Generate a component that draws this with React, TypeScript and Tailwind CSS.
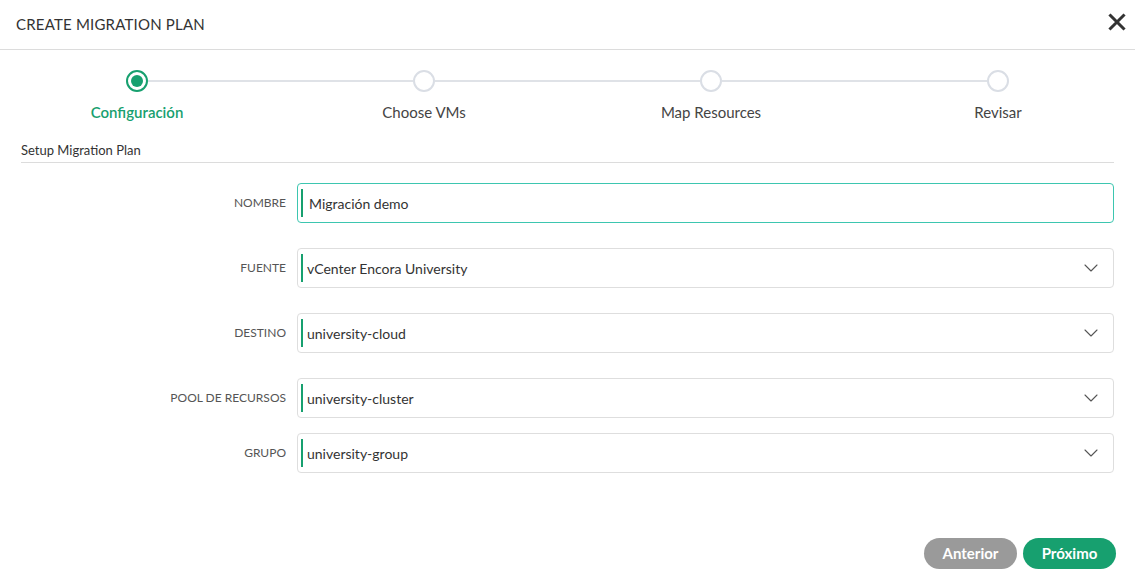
import { ChevronDown } from 'lucide-react';

const steps = ['Configuración', 'Choose VMs', 'Map Resources', 'Revisar'];

const fields = [
  { label: 'NOMBRE', value: 'Migración demo', input: true, mt: 'mt-[20px]' },
  { label: 'FUENTE', value: 'vCenter Encora University', mt: 'mt-[25px]' },
  { label: 'DESTINO', value: 'university-cloud', mt: 'mt-[25px]' },
  { label: 'POOL DE RECURSOS', value: 'university-cluster', mt: 'mt-[25px]' },
  { label: 'GRUPO', value: 'university-group', mt: 'mt-[15px]' },
];

function StepDot({ active }: { active: boolean }) {
  if (active) {
    return (
      <div className="flex h-[22px] w-[22px] shrink-0 items-center justify-center rounded-full border-2 border-[#17a06f] bg-white">
        <div className="h-[12px] w-[12px] rounded-full bg-[#17a06f]" />
      </div>
    );
  }
  return <div className="h-[22px] w-[22px] shrink-0 rounded-full border-2 border-[#dadee5] bg-white" />;
}

export default function App() {
  return (
    <div
      className="flex h-[588px] w-[1135px] flex-col bg-white text-[#333]"
      style={{ fontFamily: 'Lato, "Open Sans", sans-serif' }}
    >
      <div className="flex h-[50px] shrink-0 items-center justify-between border-b border-[#dcdcdc] pl-4 pr-[8px]">
        <h1 className="text-[15px] tracking-[0.2px] text-[#333]">CREATE MIGRATION PLAN</h1>
        <svg width="20" height="20" viewBox="0 0 20 20" className="mb-[5px]">
          <path d="M3.5 3.5 L16.5 16.5 M16.5 3.5 L3.5 16.5" stroke="#333" strokeWidth="3" strokeLinecap="square" />
        </svg>
      </div>

      <div className="mt-[20px] flex items-center px-[126px]">
        {steps.map((s, i) => (
          <div key={s} className={i < steps.length - 1 ? 'flex flex-1 items-center' : 'flex items-center'}>
            <StepDot active={i === 0} />
            {i < steps.length - 1 && <div className="h-[2px] flex-1 bg-[#dfe2e7]" />}
          </div>
        ))}
      </div>
      <div className="mt-[9px] flex px-[126px]">
        {steps.map((s, i) => (
          <div key={s} className={i < steps.length - 1 ? 'flex flex-1' : 'flex'}>
            <div className="flex w-[22px] justify-center">
              <span
                className={
                  i === 0
                    ? 'whitespace-nowrap text-[15px] font-semibold text-[#17a06f]'
                    : 'whitespace-nowrap text-[15px] text-[#444]'
                }
              >
                {s}
              </span>
            </div>
          </div>
        ))}
      </div>

      <div className="mx-[21px] mt-[17px] border-b border-[#dcdcdc] pb-[2px] text-[13px] text-[#333]">
        Setup Migration Plan
      </div>

      <div className="flex flex-col pr-[21px]">
        {fields.map((f) => (
          <div key={f.label} className={`flex items-center ${f.mt}`}>
            <div className="w-[287px] pr-[1px] text-right text-[12px] text-[#555]">{f.label}</div>
            <div
              className={
                f.input
                  ? 'ml-[10px] flex h-[40px] flex-1 items-center rounded-[4px] border border-[#3dc6b0] pl-[3px]'
                  : 'ml-[10px] flex h-[40px] flex-1 items-center rounded-[4px] border border-[#dedede] pl-[3px] pr-[10px]'
              }
            >
              <div className="h-[28px] w-[2px] bg-[#17a06f]" />
              <span className={f.input ? 'ml-[6px] flex-1 text-[14px] text-[#333]' : 'ml-[4px] flex-1 text-[14px] text-[#333]'}>
                {f.value}
              </span>
              {!f.input && <ChevronDown size={24} strokeWidth={1.1} className="text-[#555]" />}
            </div>
          </div>
        ))}
      </div>

      <div className="mt-auto mb-[19px] flex justify-end gap-[6px] pr-[19px]">
        <button className="h-[31px] w-[93px] rounded-full bg-[#9a9a9a] text-[15px] font-bold text-white">Anterior</button>
        <button className="h-[31px] w-[93px] rounded-full bg-[#17a06f] text-[15px] font-bold text-white">Próximo</button>
      </div>
    </div>
  );
}
